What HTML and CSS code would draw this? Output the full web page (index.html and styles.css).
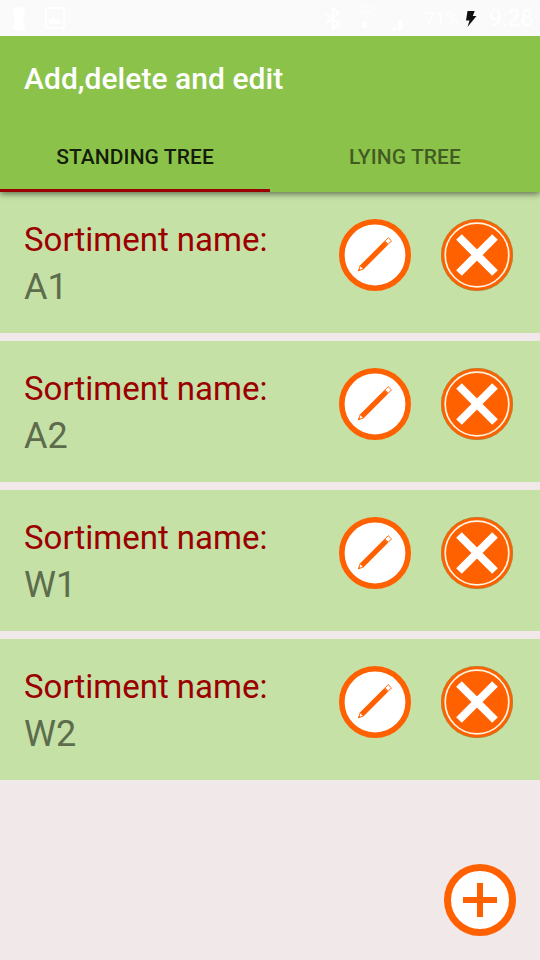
FILE: index.html
```html
<!DOCTYPE html>
<html lang="en">
<head>
<meta charset="utf-8">
<title>Add,delete and edit</title>
<link rel="stylesheet" href="styles.css">
</head>
<body>
<svg class="defs" aria-hidden="true">
  <symbol id="edit" viewBox="0 0 72 72">
    <circle cx="36" cy="36" r="33.2" fill="#fff" stroke="#ff6000" stroke-width="5.6"/>
    <g transform="translate(19 52.2) rotate(-45)">
      <path d="M5 -2.600H40V2.600H5z" fill="#ff6000"/>
      <path d="M.8 0L5.5 -2.3V2.3z" fill="#fff" stroke="#ff6000" stroke-width=".9"/>
      <path d="M40.500 -2.300h4.600v4.600H40.500z" fill="#fff" stroke="#ff6000" stroke-width=".9"/>
      <path d="M0 0L2.4 -1.2V1.2z" fill="#ff6000"/>
    </g>
  </symbol>
  <symbol id="remove" viewBox="0 0 72 72">
    <circle cx="36" cy="36" r="36" fill="#ff6000"/>
    <circle cx="36" cy="36" r="35.7" fill="none" stroke="#a08a3c" stroke-width=".6"/>
    <circle cx="36" cy="36" r="31.8" fill="none" stroke="#fff5e0" stroke-width="1.7"/>
    <path d="M18 18L54 54M54 18L18 54" stroke="#fff" stroke-width="8"/>
  </symbol>
</svg>

<div class="status">
  <svg class="status-left" viewBox="0 0 80 36" width="80" height="36">
    <path d="M13 12a6 5 0 1 1 12 0c0 3-2 4-2 6l2 12H13l2-12c0-2-2-3-2-6z" fill="#fff"/>
    <rect x="46" y="8" width="18" height="20" rx="1" fill="none" stroke="#fff" stroke-width="2"/>
    <path d="M49 24v-3l4-4 3 3 2-2 3 4v2z" fill="#fff"/>
  </svg>
  <svg viewBox="320 0 100 36" width="100" height="36">
    <path d="M326 14l13 10-6 5V8l6 5-13 10" fill="none" stroke="#fff" stroke-width="2"/>
    <path d="M358 10q9-9 18 0M361 14q6-6 12 0M364 18q3-3 6 0" fill="none" stroke="#fff" stroke-opacity=".6" stroke-width="1.5"/>
    <path d="M363 21h3v4h2l-3.500 4-3.500-4h2z" fill="#fff"/>
    <path d="M391 30l5-4v4zM398 30v-8l4-3v11z" fill="#fff"/>
  </svg>
  <span class="battery">71%</span>
  <svg class="bolt" viewBox="0 0 14 20" width="14" height="20">
    <path d="M3.500 2h7.200L8.800 7h3.700L3.500 18l2-6.500H2z" fill="#111"/>
  </svg>
  <span class="clock">9:28</span>
</div>

<header class="appbar">
  <h1>Add,delete and edit</h1>
  <nav class="tabs">
    <a class="tab active">STANDING TREE</a>
    <a class="tab">LYING TREE</a>
  </nav>
</header>

<main class="list">
  <article class="row">
    <div class="text"><div class="label">Sortiment name:</div><div class="value">A1</div></div>
    <svg class="icon"><use href="#edit"/></svg>
    <svg class="icon"><use href="#remove"/></svg>
  </article>
  <article class="row">
    <div class="text"><div class="label">Sortiment name:</div><div class="value">A2</div></div>
    <svg class="icon"><use href="#edit"/></svg>
    <svg class="icon"><use href="#remove"/></svg>
  </article>
  <article class="row">
    <div class="text"><div class="label">Sortiment name:</div><div class="value">W1</div></div>
    <svg class="icon"><use href="#edit"/></svg>
    <svg class="icon"><use href="#remove"/></svg>
  </article>
  <article class="row">
    <div class="text"><div class="label">Sortiment name:</div><div class="value">W2</div></div>
    <svg class="icon"><use href="#edit"/></svg>
    <svg class="icon"><use href="#remove"/></svg>
  </article>
</main>

<svg class="add" viewBox="0 0 72 72">
  <circle cx="36" cy="36" r="32.500" fill="#fff" stroke="#ff6000" stroke-width="7"/>
  <path d="M36 19v34M19 36h34" stroke="#ff6000" stroke-width="6"/>
</svg>
</body>
</html>
```
FILE: styles.css
```css
* {
  box-sizing: border-box;
}

body {
  margin: 0;
  width: 540px;
  height: 960px;
  overflow: hidden;
  background: #f1e8e9;
  font-family: Roboto, sans-serif;
}

.defs {
  display: none;
}

.status {
  position: relative;
  z-index: 2;
  display: flex;
  height: 36px;
  background: #fafafa;
  color: #fff;
  line-height: 37px;
}

.status-left {
  margin-right: 240px;
}

.battery {
  width: 44px;
  padding-left: 5px;
  font-size: 18px;
}

.bolt {
  margin-top: 9px;
}

.clock {
  padding-left: 11px;
  font-size: 23px;
}

.appbar {
  position: relative;
  z-index: 1;
  height: 156px;
  background: #8bc34a;
  box-shadow: 0 2px 6px rgba(0, 0, 0, 0.5);
}

h1 {
  margin: 0;
  height: 84px;
  padding-left: 24px;
  color: #fff;
  font-size: 30px;
  font-weight: 500;
  letter-spacing: 0.04px;
  line-height: 86px;
}

.tabs {
  display: grid;
  grid-template-columns: 1fr 1fr;
  height: 72px;
}

.tab {
  height: 72px;
  color: rgba(0, 0, 0, 0.54);
  font-size: 21px;
  font-weight: 500;
  letter-spacing: 0.08px;
  line-height: 74px;
  text-align: center;
}

.tab.active {
  border-bottom: 3px solid #9b0000;
  color: rgba(0, 0, 0, 0.87);
}

.list {
  display: flex;
  flex-direction: column;
  gap: 8px;
}

.row {
  display: flex;
  gap: 30px;
  height: 141px;
  padding: 27px 27px 0 24px;
  background: #c5e1a5;
}

.text {
  flex: 1;
  white-space: nowrap;
}

.label {
  color: #9b0000;
  font-size: 33px;
  line-height: 42px;
}

.value {
  color: #5c6c4d;
  font-size: 36px;
  line-height: 52px;
}

.icon {
  flex: none;
  width: 72px;
  height: 72px;
}

.add {
  position: absolute;
  right: 24px;
  bottom: 24px;
  width: 72px;
  height: 72px;
}
```
